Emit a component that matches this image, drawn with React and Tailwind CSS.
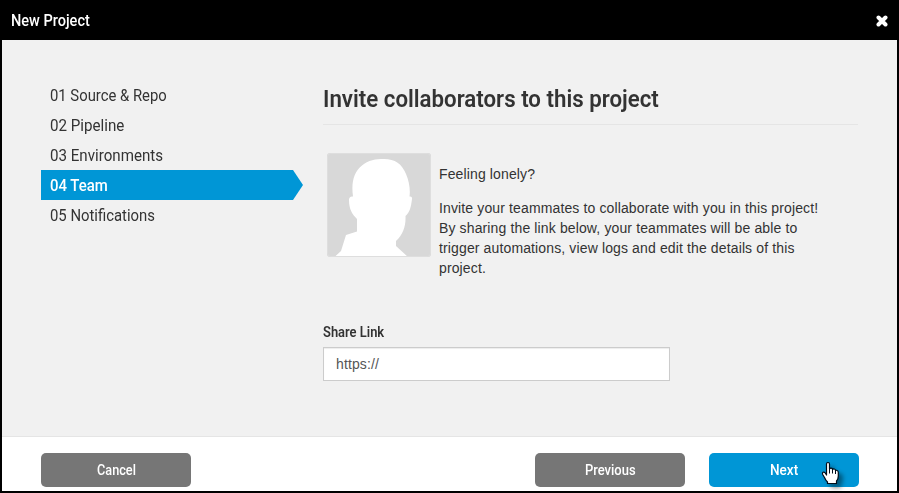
import { useLayoutEffect, useRef, useState } from "react";

// Condensed text: squeezes its content horizontally to the given width.
function Condensed({ width, children }) {
  const ref = useRef(null);
  const [scale, setScale] = useState(1);
  useLayoutEffect(() => {
    setScale(width / ref.current.offsetWidth);
  }, [width]);
  return (
    <span className="block font-[Roboto,'Open_Sans',sans-serif]" style={{ width }}>
      <span
        ref={ref}
        className="inline-block origin-left whitespace-nowrap align-top"
        style={{ transform: `scaleX(${scale})` }}
      >
        {children}
      </span>
    </span>
  );
}

const steps = [
  { label: "01 Source & Repo", width: 117 },
  { label: "02 Pipeline", width: 74 },
  { label: "03 Environments", width: 113 },
  { label: "04 Team", width: 58, active: true },
  { label: "05 Notifications", width: 105 },
];

function Step({ label, width, active }) {
  return (
    <li
      className={
        active
          ? "flex h-[30px] w-[262px] items-center bg-[#0096d6] pl-[9px] font-medium text-white [clip-path:polygon(0_0,252px_0,100%_50%,252px_100%,0_100%)]"
          : "flex h-[30px] w-[262px] items-center pl-[9px] text-[#333]"
      }
    >
      <Condensed width={width}>{label}</Condensed>
    </li>
  );
}

function Avatar() {
  return (
    <svg className="h-[104px] w-[104px] shrink-0 rounded-[3px]" viewBox="0 0 104 104">
      <rect width="104" height="104" fill="#d8d8d8" />
      <path
        fill="#fff"
        d="M7.500 104 L14 98 L19 82 L30 78.500 V66 C25 61 22 56 22 47 Q22 43 26 43.500 C24 29 27 19 35 12.500 C41 7 49 6 57 6 C68 6 75 11 79 21 C82 28 83.500 36 82.500 43.500 Q85.500 43 85 46 C84 54 83 59 78.500 63 C79 73 76 82 69 88 V93 L81 104 Z"
      />
      <rect x="0.5" y="0.5" width="103" height="103" rx="3" fill="none" stroke="#dedede" />
    </svg>
  );
}

function HandCursor() {
  return (
    <svg
      className="absolute left-[112px] top-[8px] h-[26px] w-[22px] overflow-visible [filter:drop-shadow(4px_4px_2px_rgba(0,0,0,0.4))]"
      viewBox="0 0 22 26"
    >
      <path
        d="M5.500 14 V3 Q5.500 1.500 7 1.500 Q8.500 1.500 8.500 3 V8 Q9 7 10.200 7.200 Q11.500 7.400 11.500 8.500 Q12.200 7.700 13.300 8 Q14.500 8.300 14.500 9.500 Q15.200 9 16.200 9.500 Q17.300 10 17.300 11.500 V15 Q17.300 18 15.500 20 V22.500 H6.500 V21 Q4.500 19 3.500 16.500 L1.700 13.500 Q1 12 2 11.300 Q3.200 10.700 4.200 12 Z"
        fill="#fff"
        stroke="#000c18"
        strokeWidth="1.2"
        strokeLinejoin="round"
      />
      <path d="M8.500 8 V12.500 M11.500 8.500 V12.500 M14.500 9.500 V13" fill="none" stroke="#000c18" strokeWidth="1" />
    </svg>
  );
}

const buttonBase =
  "relative flex h-[34px] w-[150px] items-center justify-center rounded-[5px] text-[14px] leading-5 font-medium text-white";

export default function App() {
  return (
    <div className="flex h-[493px] w-[899px] flex-col overflow-hidden border-x-2 border-b-2 border-black bg-[#f1f1f1]">
      <header className="flex h-10 shrink-0 items-center justify-between bg-black pt-0.5 pl-[9px] pr-[9px] text-[16px] leading-6 font-medium text-white">
        <Condensed width={79}>New Project</Condensed>
        <svg className="h-3 w-3" viewBox="0 0 12 12" role="img" aria-label="Close">
          <path d="M2.500 2.500 L9.500 9.500 M9.500 2.500 L2.500 9.500" stroke="#fff" strokeWidth="4" strokeLinecap="round" />
        </svg>
      </header>

      <main className="flex h-[396px] shrink-0 pl-[39px]">
        <ul className="w-[282px] shrink-0 pt-10 text-[17px] leading-6">
          {steps.map((step) => (
            <Step key={step.label} {...step} />
          ))}
        </ul>

        <section className="w-[535px] shrink-0 text-[#333]">
          <div className="flex h-[85px] items-end border-b border-[#e5e5e5] pb-[9px]">
            <h1 className="text-[24px] leading-8 font-semibold">
              <Condensed width={336}>Invite collaborators to this project</Condensed>
            </h1>
          </div>

          <div className="flex pl-1 pt-7">
            <Avatar />
            <div className="w-[400px] pl-2 pt-[11px] font-['Liberation_Sans',Arial,sans-serif] text-[14px] leading-5 tracking-[0.13px]">
              <p>Feeling lonely?</p>
              <p className="mt-3.5">
                Invite your teammates to collaborate with you in this project!
                <br />
                By sharing the link below, your teammates will be able to
                <br />
                trigger automations, view logs and edit the details of this
                <br />
                project.
              </p>
            </div>
          </div>

          <div className="mt-11 text-[14px] leading-5 font-semibold">
            <Condensed width={61}>Share Link</Condensed>
          </div>
          <div className="mt-[5px] flex h-[34px] w-[347px] items-center border border-[#ccc] bg-white px-3 font-['Liberation_Sans',Arial,sans-serif] text-[14px] tracking-[0.13px] text-[#555] shadow-[inset_0_1px_1px_rgba(0,0,0,0.075)]">
            https://
          </div>
        </section>
      </main>

      <footer className="flex h-[55px] shrink-0 border-t border-[#e5e5e5] bg-white pl-[39px] pt-4">
        <div className={`${buttonBase} bg-[#767676]`}>
          <Condensed width={39}>Cancel</Condensed>
        </div>
        <div className={`${buttonBase} ml-[344px] bg-[#767676]`}>
          <Condensed width={51}>Previous</Condensed>
        </div>
        <div className={`${buttonBase} ml-6 bg-[#0096d6]`}>
          <Condensed width={28}>Next</Condensed>
          <HandCursor />
        </div>
      </footer>
    </div>
  );
}
